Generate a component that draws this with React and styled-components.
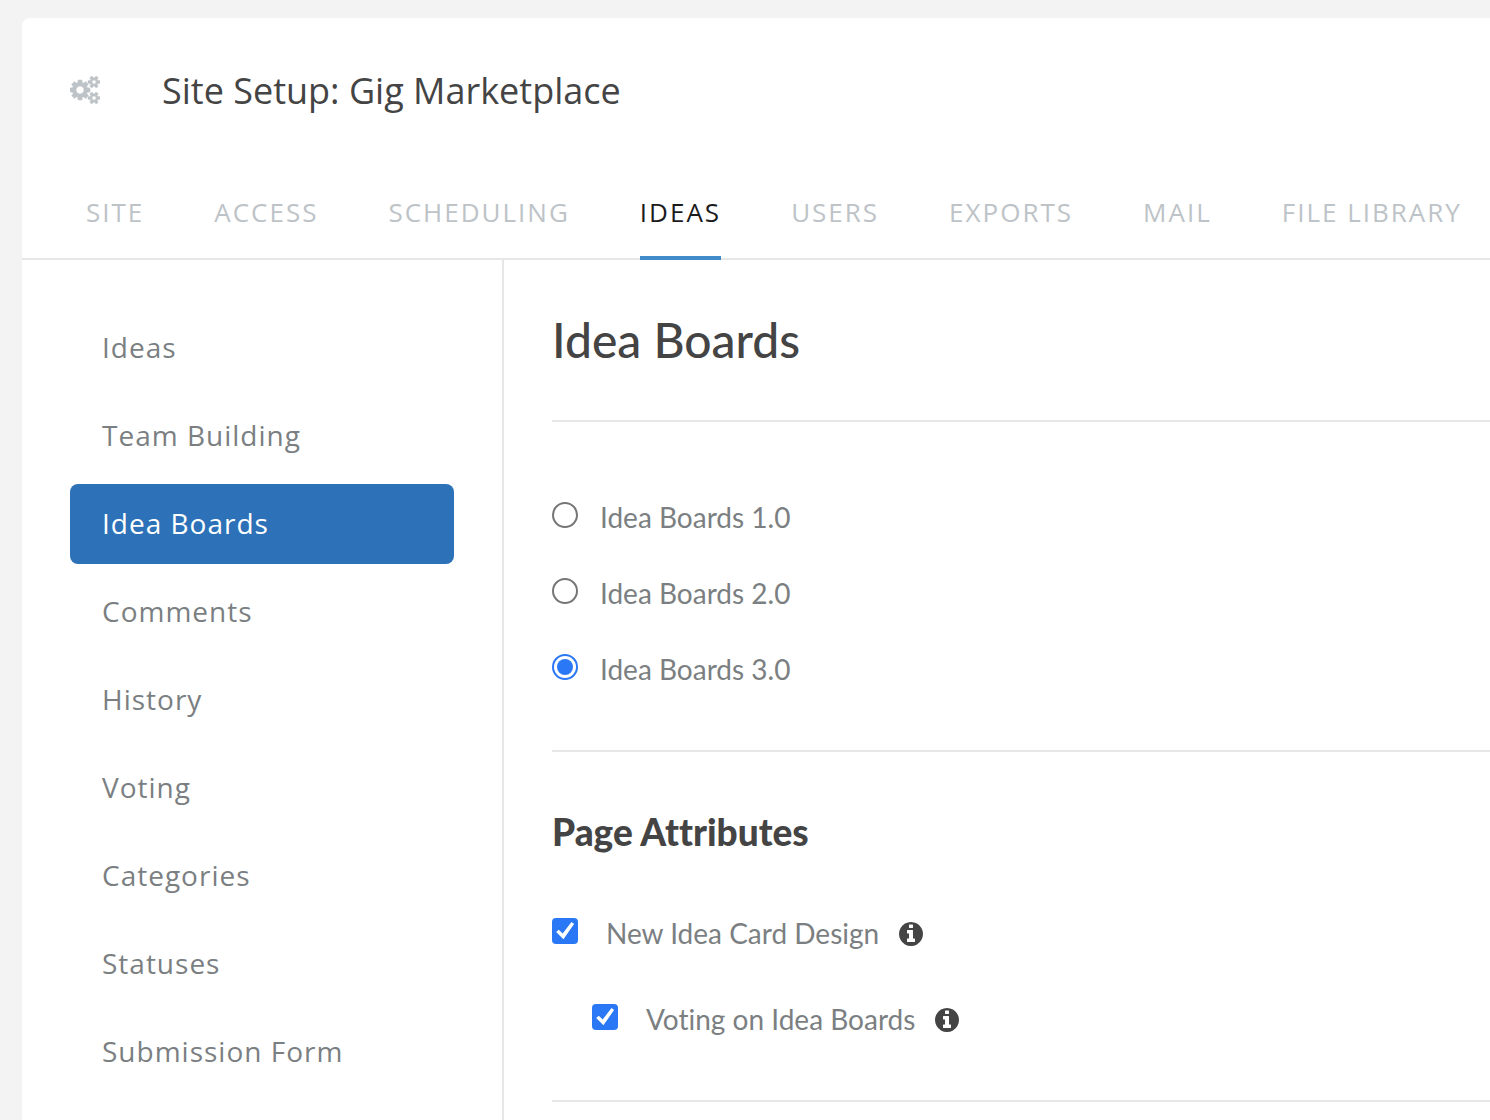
import React, { useState } from "react";
import styled, { createGlobalStyle, css } from "styled-components";

const tabs = ["Site", "Access", "Scheduling", "Ideas", "Users", "Exports", "Mail", "File Library"];

const sections = [
  "Ideas",
  "Team Building",
  "Idea Boards",
  "Comments",
  "History",
  "Voting",
  "Categories",
  "Statuses",
  "Submission Form",
];

const versions = ["1.0", "2.0", "3.0"];

const GlobalStyle = createGlobalStyle`
  * {
    box-sizing: border-box;
  }
  body {
    margin: 0;
    background: #f3f3f3;
    overflow-x: hidden;
  }
`;

const Page = styled.div`
  display: flex;
  min-height: 100vh;
  padding: 18px 0 0 22px;
`;

const Panel = styled.div`
  display: flex;
  flex: 1;
  flex-direction: column;
  min-width: 0;
  background: #fff;
  border-top-left-radius: 8px;
  font-family: "Open Sans", sans-serif;
`;

const Header = styled.header`
  display: flex;
  align-items: center;
  gap: 62px;
  height: 144px;
  padding-left: 48px;
`;

const Title = styled.h1`
  margin: 0;
  padding-top: 2px;
  font-size: 36px;
  line-height: 48px;
  font-weight: 400;
  color: #444;
`;

const TabBar = styled.nav`
  display: flex;
  gap: 70px;
  height: 98px;
  padding-left: 64px;
  border-bottom: 2px solid #e7e7e7;
`;

const Tab = styled.a`
  height: 98px;
  padding-top: 32px;
  font-size: 26px;
  line-height: 36px;
  letter-spacing: 2px;
  white-space: nowrap;
  text-transform: uppercase;
  text-decoration: none;
  color: ${props => (props.$active ? "#1b1b1b" : "#bdc3c7")};
  border-bottom: 4px solid ${props => (props.$active ? "#428bca" : "transparent")};
`;

const Columns = styled.div`
  display: flex;
  flex: 1;
`;

const Sidebar = styled.nav`
  display: flex;
  flex-direction: column;
  flex: 0 0 482px;
  gap: 8px;
  padding: 48px 48px 28px;
  border-right: 2px solid #e7e7e7;
`;

const SideLink = styled.a`
  padding: 20px 32px 22px;
  border-radius: 8px;
  font-size: 28px;
  line-height: 38px;
  letter-spacing: 1px;
  text-decoration: none;
  color: ${props => (props.$active ? "#fff" : "#7b7f82")};
  background: ${props => (props.$active ? "#2d72b8" : "transparent")};
`;

const Main = styled.main`
  flex: 1;
  min-width: 0;
  padding-left: 48px;
  font-family: Lato, sans-serif;
  font-variant-ligatures: none;
`;

const Section = styled.section`
  border-bottom: 2px solid #e7e7e7;
`;

const H2 = styled.h2`
  margin: 0;
  padding: 51px 0;
  font-size: 48px;
  line-height: 58px;
  font-weight: 500;
  color: #444;
`;

const H3 = styled.h3`
  margin: 0 0 14px;
  font-size: 37px;
  line-height: 44px;
  font-weight: 900;
  color: #444;
`;

const RadioList = styled.div`
  display: flex;
  flex-direction: column;
  gap: 36px;
  padding: 76px 0 60px;
`;

const Attributes = styled.div`
  display: flex;
  flex-direction: column;
  gap: 46px;
  padding: 58px 0 60px;
`;

const Option = styled.div`
  display: flex;
  align-items: center;
  gap: 20px;
  height: 40px;
  margin-left: ${props => (props.$nested ? "40px" : "0")};
`;

const Label = styled.label`
  display: flex;
  align-self: flex-start;
  gap: ${props => props.$gap};
  font-size: 28px;
  line-height: 38px;
  color: #7b7f82;
`;

const inputStyles = css`
  appearance: none;
  flex: none;
  width: 26px;
  height: 26px;
  margin: 4px 0 0;
`;

const Radio = styled.input`
  ${inputStyles};
  padding: 3px;
  border: 2px solid #767676;
  border-radius: 50%;
  &:checked {
    border-color: #2b78f6;
    background: #2b78f6 content-box;
  }
`;

const Checkbox = styled.input`
  ${inputStyles};
  border: 2px solid #767676;
  border-radius: 4px;
  &:checked {
    border: 0;
    background: #2b78f6;
  }
  &:checked::before {
    content: "";
    display: block;
    height: 26px;
    background: #fff;
    clip-path: polygon(16% 54%, 26% 45%, 41% 60%, 75% 15%, 85% 23%, 44% 82%);
  }
`;

const InfoButton = styled.button`
  display: flex;
  padding: 0;
  border: 0;
  background: none;
  color: #444;
  cursor: pointer;
`;

const smallGear =
  "v140q0 16-149 31-12 27-30 52 51 113 51 138 0 4-4 7-122 71-124 71-8 0-46-47t-52-68q-20 2-30 2t-30-2q-14 21-52 68t-46 47q-2 0-124-71-4-3-4-7 0-25 51-138-18-25-30-52-149-15-149-31v-140q0-16 149-31 13-29 30-52-51-113-51-138 0-4 4-7 4-2 35-20t59-34 30-16q8 0 46 46.5t52 67.5q20-2 30-2t30 2q51-71 92-112l6-2q4 0 124 70 4 3 4 7 0 25-51 138 17 23 30 52 149 15 149 31z";

const CogsIcon = () => (
  <svg width="30" height="28" viewBox="0 0 1920 1792" fill="#bdc3c7" stroke="#bdc3c7" strokeWidth="40" aria-hidden="true">
    <path
      d={`M896 896q0-106-75-181t-181-75-181 75-75 181 75 181 181 75 181-75 75-181zm768 512q0-52-38-90t-90-38-90 38-38 90q0 53 37.5 90.5t90.5 37.5 90.5-37.5 37.5-90.5zm0-1024q0-52-38-90t-90-38-90 38-38 90q0 53 37.5 90.5t90.5 37.5 90.5-37.5 37.5-90.5zm-384 421v185q0 10-7 19.5t-16 10.5l-155 24q-11 35-32 76 34 48 90 115 7 11 7 20 0 12-7 19-23 30-82.5 89.5t-78.5 59.5q-11 0-21-7l-115-90q-37 19-77 31-11 108-23 155-7 24-30 24h-186q-11 0-20-7.5t-10-17.5l-23-153q-34-10-75-31l-118 89q-7 7-20 7-11 0-21-8-144-133-144-160 0-9 7-19 10-14 41-53t47-61q-23-44-35-82l-152-24q-10-1-17-9.5t-7-19.5v-185q0-10 7-19.5t16-10.5l155-24q11-35 32-76-34-48-90-115-7-11-7-20 0-12 7-20 22-30 82-89t79-59q11 0 21 7l115 90q34-18 77-32 11-108 23-154 7-24 30-24h186q11 0 20 7.5t10 17.5l23 153q34 10 75 31l118-89q8-7 20-7 11 0 21 8 144 133 144 160 0 8-7 19-12 16-42 54t-45 60q23 48 34 82l152 23q10 2 17 10.5t7 19.5zM1920 1338${smallGear}M1920 314${smallGear}`}
    />
  </svg>
);

const InfoIcon = () => (
  <svg width="24" height="24" viewBox="128 128 1536 1536" fill="currentColor" aria-hidden="true">
    <path d="M1152 1376v-160q0-14-9-23t-23-9h-96v-512q0-14-9-23t-23-9h-320q-14 0-23 9t-9 23v160q0 14 9 23t23 9h96v320h-96q-14 0-23 9t-9 23v160q0 14 9 23t23 9h448q14 0 23-9t9-23zm-128-896v-160q0-14-9-23t-23-9h-192q-14 0-23 9t-9 23v160q0 14 9 23t23 9h192q14 0 23-9t9-23zm640 416q0 209-103 385.5t-279.5 279.5-385.5 103-385.5-103-279.5-279.5-103-385.5 103-385.5 279.5-279.5 385.5-103 385.5 103 279.5 279.5 103 385.5z" />
  </svg>
);

const Attribute = ({ id, label, nested }) => (
  <Option $nested={nested}>
    <Label htmlFor={id} $gap="28px">
      <Checkbox type="checkbox" id={id} defaultChecked />
      {label}
    </Label>
    <InfoButton type="button" aria-label={`About ${label}`}>
      <InfoIcon />
    </InfoButton>
  </Option>
);

const App = () => {
  const [version, setVersion] = useState("3.0");

  return (
    <Page>
      <GlobalStyle />
      <Panel>
        <Header>
          <CogsIcon />
          <Title>Site Setup: Gig Marketplace</Title>
        </Header>
        <TabBar>
          {tabs.map(tab => (
            <Tab key={tab} href="#" $active={tab === "Ideas"}>{tab}</Tab>
          ))}
        </TabBar>
        <Columns>
          <Sidebar>
            {sections.map(item => (
              <SideLink key={item} href="#" $active={item === "Idea Boards"}>{item}</SideLink>
            ))}
          </Sidebar>
          <Main>
            <Section>
              <H2>Idea Boards</H2>
            </Section>
            <Section>
              <RadioList>
                {versions.map(v => (
                  <Option key={v}>
                    <Label htmlFor={`boards-${v}`} $gap="22px">
                      <Radio
                        type="radio"
                        name="version"
                        id={`boards-${v}`}
                        checked={version === v}
                        onChange={() => setVersion(v)}
                      />
                      Idea Boards {v}
                    </Label>
                  </Option>
                ))}
              </RadioList>
            </Section>
            <Section>
              <Attributes>
                <H3>Page Attributes</H3>
                <Attribute id="card-design" label="New Idea Card Design" />
                <Attribute id="board-voting" label="Voting on Idea Boards" nested />
              </Attributes>
            </Section>
          </Main>
        </Columns>
      </Panel>
    </Page>
  );
};

export default App;
